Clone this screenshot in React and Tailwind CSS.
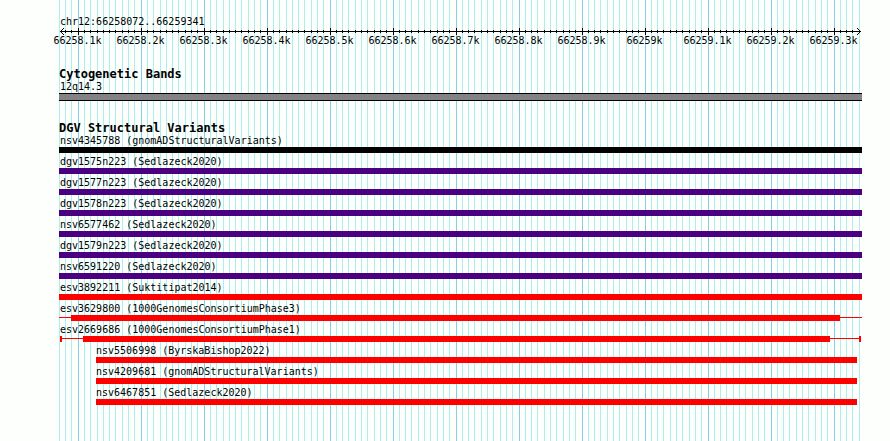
import React from 'react';

const REGION = 'chr12:66258072..66259341';
const PANEL = 803;

const pct = (n) => `${(n / PANEL) * 100}%`;

// one major line every 100 bp, minor lines every 10 bp
const MAJOR = [19, 82, 145, 208, 271, 334, 397, 460, 523, 586, 649, 712, 775];
const STEPS = [6, 12, 19, 25, 31, 37, 44, 50, 56];
const LATE_STEPS = [6, 12, 18, 25, 31, 37, 44, 50, 56];
const MINOR = [
  0, 6, 12,
  ...MAJOR.flatMap((x, i) => (i < 4 ? STEPS : LATE_STEPS).map((s) => x + s)),
].filter((x) => x < PANEL);

const LABELS = [
  '66258.1k', '66258.2k', '66258.3k', '66258.4k', '66258.5k', '66258.6k', '66258.7k',
  '66258.8k', '66258.9k', '66259k', '66259.1k', '66259.2k', '66259.3k',
];

const VARIANTS = [
  { id: 'nsv4345788', study: 'gnomADStructuralVariants', color: 'bg-black', start: 0, end: 803 },
  { id: 'dgv1575n223', study: 'Sedlazeck2020', color: 'bg-[#4b0082]', start: 0, end: 803 },
  { id: 'dgv1577n223', study: 'Sedlazeck2020', color: 'bg-[#4b0082]', start: 0, end: 803 },
  { id: 'dgv1578n223', study: 'Sedlazeck2020', color: 'bg-[#4b0082]', start: 0, end: 803 },
  { id: 'nsv6577462', study: 'Sedlazeck2020', color: 'bg-[#4b0082]', start: 0, end: 803 },
  { id: 'dgv1579n223', study: 'Sedlazeck2020', color: 'bg-[#4b0082]', start: 0, end: 803 },
  { id: 'nsv6591220', study: 'Sedlazeck2020', color: 'bg-[#4b0082]', start: 0, end: 803 },
  { id: 'esv3892211', study: 'Suktitipat2014', color: 'bg-[#ff0000]', start: 0, end: 803 },
  { id: 'esv3629800', study: '1000GenomesConsortiumPhase3', color: 'bg-[#ff0000]', start: 12, end: 781, whisker: 'open' },
  { id: 'esv2669686', study: '1000GenomesConsortiumPhase1', color: 'bg-[#ff0000]', start: 24, end: 771, whisker: 'capped' },
  { id: 'nsv5506998', study: 'ByrskaBishop2022', color: 'bg-[#ff0000]', start: 37, end: 798 },
  { id: 'nsv4209681', study: 'gnomADStructuralVariants', color: 'bg-[#ff0000]', start: 37, end: 798 },
  { id: 'nsv6467851', study: 'Sedlazeck2020', color: 'bg-[#ff0000]', start: 37, end: 798 },
];

const GridLines = () => (
  <svg className="absolute inset-0 h-full w-full" shapeRendering="crispEdges" aria-hidden="true">
    {MINOR.map((x) => (
      <rect key={x} x={pct(x)} width="1" height="100%" fill="#afeeee" />
    ))}
    {MAJOR.map((x) => (
      <rect key={x} x={pct(x)} width="1" height="100%" fill="#87ceeb" />
    ))}
  </svg>
);

const Axis = () => (
  <svg className="block h-[7px] w-full" shapeRendering="crispEdges" aria-hidden="true">
    <svg x="1" overflow="visible">
      <path d="M3 0h1v1h-1zM2 1h1v1h-1zM1 2h1v1h-1zM0 3h1v1h-1zM1 4h1v1h-1zM2 5h1v1h-1zM3 6h1v1h-1z" />
    </svg>
    <rect x={pct(1)} y="3" width={pct(PANEL - 2)} height="1" />
    {MINOR.slice(1, -1).map((x) => (
      <rect key={x} x={pct(x)} y="2" width="1" height="3" />
    ))}
    {MAJOR.map((x) => (
      <rect key={x} x={pct(x)} width="1" height="7" />
    ))}
    <svg x="100%" overflow="visible">
      <path d="M-5 0h1v1h-1zM-4 1h1v1h-1zM-3 2h1v1h-1zM-2 3h1v1h-1zM-3 4h1v1h-1zM-4 5h1v1h-1zM-5 6h1v1h-1z" />
    </svg>
  </svg>
);

const Scale = () => (
  <div>
    <Axis />
    <div className="-ml-[13px] -mr-[3px] grid grid-cols-13 text-center">
      {LABELS.map((label) => (
        <span key={label}>{label}</span>
      ))}
    </div>
  </div>
);

const Variant = ({ id, study, color, start, end, whisker }) => {
  const capped = whisker === 'capped';

  return (
    <li className="pb-[3px]">
      {start > 0 && !whisker ? (
        <p style={{ paddingLeft: pct(start) }}>{id} ({study})</p>
      ) : (
        <p className="pl-px">{id} ({study})</p>
      )}
      <div className="flex h-1.5">
        <div className={`flex ${capped ? 'pl-px' : ''}`} style={{ width: pct(start) }}>
          {capped && <div className="w-0.5 bg-[#ff0000]" />}
          {whisker && <div className="mt-0.5 h-px flex-1 bg-[#ff0000]" />}
        </div>
        <div className={color} style={{ width: pct(end - start) }} />
        <div className={`flex flex-1 ${capped ? 'pr-px' : ''}`}>
          {whisker && <div className="mt-0.5 h-px flex-1 bg-[#ff0000]" />}
          {capped && <div className="w-0.5 bg-[#ff0000]" />}
        </div>
      </div>
    </li>
  );
};

const App = () => {
  return (
    <main className="flex min-h-screen bg-[#fdfffc] pl-[59px] pr-7 font-['DejaVu_Sans_Mono',monospace] text-[10px] leading-3 text-black whitespace-nowrap">
      <div className="relative flex-1">
        <GridLines />
        <div className="relative flex flex-col gap-[21px] pt-4">
          <header>
            <h1 className="pl-px">{REGION}</h1>
            <Scale />
          </header>

          <section>
            <h2 className="text-xs leading-[13px] font-bold">Cytogenetic Bands</h2>
            <p className="pl-px">12q14.3</p>
            <div className="h-2 border-y border-black bg-[#848284]" />
          </section>

          <section>
            <h2 className="text-xs leading-[13px] font-bold">DGV Structural Variants</h2>
            <ul>
              {VARIANTS.map((v) => (
                <Variant key={v.id} {...v} />
              ))}
            </ul>
          </section>
        </div>
      </div>
    </main>
  );
};

export default App;
